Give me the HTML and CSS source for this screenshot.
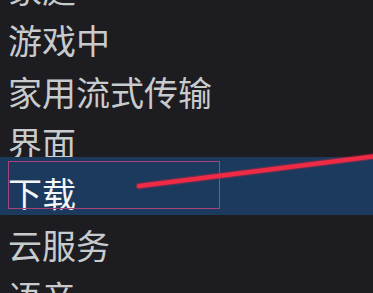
FILE: index.html
```html
<!DOCTYPE html>
<html lang="zh-CN">
<head>
<meta charset="utf-8">
<title>设置</title>
<link rel="stylesheet" href="styles.css">
</head>
<body>
<div class="page">
  <ul class="menu">
    <li class="item">家庭</li>
    <li class="item">游戏中</li>
    <li class="item">家用流式传输</li>
    <li class="item">界面</li>
    <li class="item selected">
      <span class="label">下载</span>
      <span class="highlight-box"></span>
    </li>
    <li class="item">云服务</li>
    <li class="item">语音</li>
  </ul>
  <svg class="arrow" width="373" height="293" viewBox="0 0 373 293" aria-hidden="true">
    <line x1="139" y1="186" x2="385" y2="155" stroke="#e3203d" stroke-width="7" stroke-linecap="round" opacity="0.3"/>
    <line x1="139" y1="186" x2="385" y2="155" stroke="#ee2a45" stroke-width="4.5" stroke-linecap="round"/>
  </svg>
</div>
</body>
</html>
```
FILE: styles.css
```css
html, body {
  margin: 0;
  padding: 0;
  background: #1d1c20;
}
.page {
  position: relative;
  width: 373px;
  height: 293px;
  overflow: hidden;
  background: #1d1c20;
}
.menu {
  list-style: none;
  margin: -37px 0 0 0;
  padding: 0;
  display: flex;
  flex-direction: column;
  font-family: "Noto Sans CJK SC", "Noto Sans", sans-serif;
  font-size: 34px;
  color: #c8cbce;
}
.item {
  height: 51.25px;
  line-height: 51.25px;
  padding-left: 8px;
  white-space: nowrap;
}
.item.selected {
  position: relative;
  box-sizing: border-box;
  height: 58px;
  margin: -11px 0 4.4px 0;
  padding-top: 12px;
  line-height: 47px;
  color: #f4f6f8;
  background: #1c3a5e;
}
.highlight-box {
  position: absolute;
  left: 8px;
  top: 4px;
  width: 212px;
  height: 48px;
  box-sizing: border-box;
  border: 1.5px solid #a4447a;
}
.arrow {
  position: absolute;
  left: 0;
  top: 0;
}
```
